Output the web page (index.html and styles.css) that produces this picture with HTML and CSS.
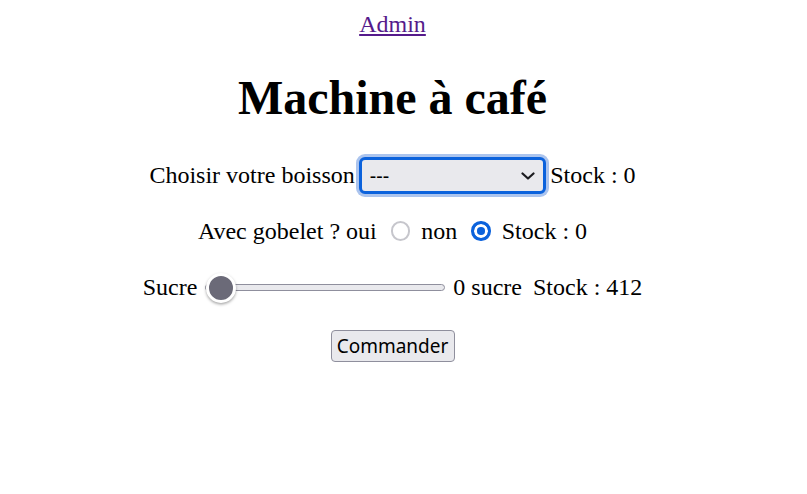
FILE: index.html
```html
<!DOCTYPE html>
<html lang="fr">
<head>
<meta charset="utf-8">
<title>Machine à café</title>
<link rel="stylesheet" href="styles.css">
</head>
<body>
<nav class="top"><a href="#" class="admin">Admin</a></nav>
<h1 class="title">Machine à café</h1>
<form class="order">
  <div class="row">
    <label class="txt" for="drink">Choisir votre boisson</label>
    <span class="select-wrap">
      <select id="drink" class="drink"><option>---</option></select>
      <svg class="chev" width="14" height="8" viewBox="0 0 14 8"><path d="M1.5 1.5 L7 6.5 L12.5 1.5" fill="none" stroke="#1b1b1f" stroke-width="2.2" stroke-linecap="round" stroke-linejoin="round"/></svg>
    </span>
    <span class="txt stock-a">Stock : 0</span>
  </div>
  <div class="row">
    <span class="txt">Avec gobelet ? oui</span>
    <input type="radio" name="cup" class="radio">
    <span class="txt">non</span>
    <input type="radio" name="cup" class="radio" checked>
    <span class="txt">Stock : 0</span>
  </div>
  <div class="row">
    <span class="txt">Sucre</span>
    <input type="range" class="sugar" min="0" max="5" value="0">
    <span class="txt">0 sucre</span>
    <span class="txt stock-s">Stock : 412</span>
  </div>
  <button type="button" class="btn">Commander</button>
</form>
</body>
</html>
```

FILE: styles.css
```css
html, body {
  background: #fff;
}
body {
  margin: 11px 34px 12px 12px;
  font-family: "Liberation Serif", "Times New Roman", serif;
  font-size: 24px;
  color: #000;
}
.top {
  text-align: center;
}
.admin {
  color: #551a8b;
  text-decoration: underline;
}
.title {
  margin: 32px 0 32px;
  font-size: 48px;
  font-weight: bold;
  text-align: center;
  line-height: normal;
}
.order {
  display: flex;
  flex-direction: column;
  align-items: center;
  gap: 20px;
}
.row {
  display: flex;
  align-items: center;
  height: 36px;
  white-space: nowrap;
}
.txt {
  line-height: normal;
}
.select-wrap {
  position: relative;
  display: inline-block;
  margin: 0 4.5px 0 4px;
  height: 37px;
}
.drink {
  -webkit-appearance: none;
  appearance: none;
  box-sizing: border-box;
  width: 187px;
  height: 37px;
  margin: 0;
  padding: 0 0 0 8px;
  border: 3px solid #0b62dc;
  border-radius: 6px;
  background: #e9e9ed;
  box-shadow: 0 0 0 3px #abc4ee;
  font-family: "Noto Sans", "Open Sans", sans-serif;
  font-size: 20px;
  color: #000;
  outline: none;
}
.chev {
  position: absolute;
  right: 11px;
  top: 15px;
  pointer-events: none;
}
.radio {
  -webkit-appearance: none;
  appearance: none;
  box-sizing: border-box;
  width: 19.5px;
  height: 19.5px;
  margin: 0 11px 0 14px;
  border: 2.5px solid #c6c6cc;
  border-radius: 50%;
  background: #fff;
}
.radio:checked {
  border: 3px solid #0b62dc;
  background: #0b62dc;
  box-shadow: inset 0 0 0 3px #fff;
}
.sugar {
  -webkit-appearance: none;
  appearance: none;
  width: 240px;
  height: 32px;
  margin: 0 8px 0 8px;
  padding: 0;
  background: transparent;
}
.sugar::-webkit-slider-runnable-track {
  height: 7px;
  border: 1px solid #8f8f9d;
  border-radius: 5px;
  background: #e9e9ed;
}
.sugar::-webkit-slider-thumb {
  -webkit-appearance: none;
  appearance: none;
  box-sizing: border-box;
  width: 30px;
  height: 30px;
  margin-top: -11.5px;
  border: 3px solid #fff;
  border-radius: 50%;
  background: #6b6a78;
  box-shadow: 0 1.5px 3px rgba(0, 0, 0, 0.35);
}
.stock-s {
  margin-left: 11px;
}
.btn {
  box-sizing: border-box;
  width: 124px;
  height: 32px;
  margin-top: 5px;
  padding: 0;
  border: 1px solid #8f8f9d;
  border-radius: 4px;
  background: #e9e9ed;
  font-family: "Noto Sans", "Open Sans", sans-serif;
  font-size: 19px;
  color: #000;
}
```
